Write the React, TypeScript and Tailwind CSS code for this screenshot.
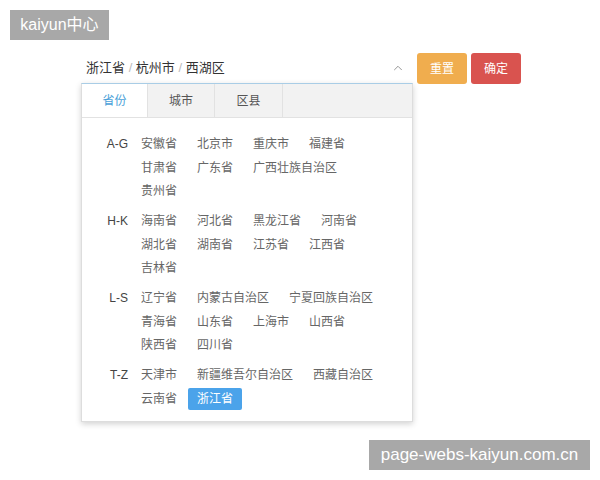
import { ChevronUp } from "lucide-react";

const groups = ["A-G", "H-K", "L-S", "T-Z"];

const rows: Record<string, string[][]> = {
  "A-G": [["安徽省", "北京市", "重庆市", "福建省"], ["甘肃省", "广东省", "广西壮族自治区"], ["贵州省"]],
  "H-K": [["海南省", "河北省", "黑龙江省", "河南省"], ["湖北省", "湖南省", "江苏省", "江西省"], ["吉林省"]],
  "L-S": [["辽宁省", "内蒙古自治区", "宁夏回族自治区"], ["青海省", "山东省", "上海市", "山西省"], ["陕西省", "四川省"]],
  "T-Z": [["天津市", "新疆维吾尔自治区", "西藏自治区"], ["云南省", "浙江省"]],
};

export default function App() {
  return (
    <div className="relative h-[480px] w-[600px] overflow-hidden bg-white font-['Liberation_Sans','Noto_Sans_CJK_SC',sans-serif]">
      <div className="absolute left-[10px] top-[10px] flex h-[30px] w-[99px] items-center justify-center bg-[#a8a8a8] text-[16px] text-white">
        kaiyun中心
      </div>

      <div className="flex items-start pl-[81px] pt-[53px]">
        <div className="w-[332px]">
          <div className="flex h-[30px] items-center justify-between pl-[5px] pr-[8px] text-[13px] text-[#333]">
            <span>
              浙江省 <span className="text-[#bbb]">/</span> 杭州市 <span className="text-[#bbb]">/</span> 西湖区
            </span>
            <ChevronUp className="h-[14px] w-[14px] text-[#888]" strokeWidth={1.5} />
          </div>
          <div className="border border-[#ddd] border-t-[#a9cde6] bg-white pb-[11px] shadow-[0_2px_6px_rgba(0,0,0,0.18)]">
            <div className="flex h-[34px] border-b border-[#e2e2e2] bg-[#f2f2f2] text-[12px]">
              <div className="flex w-[66px] items-center justify-center border-r border-[#e2e2e2] bg-white text-[#4a9fd8]">省份</div>
              <div className="flex w-[67px] items-center justify-center border-r border-[#e2e2e2] text-[#555]">城市</div>
              <div className="flex w-[68px] items-center justify-center border-r border-[#e2e2e2] text-[#555]">区县</div>
            </div>
            <div className="flex flex-col gap-[8px] pt-[15px] text-[12px]">
              {groups.map((g) => (
                <div key={g} className="flex">
                  <div className="w-[50px] pr-[4px] text-right leading-[22px] text-[#444]">{g}</div>
                  <div className="flex flex-col gap-[1.5px]">
                    {rows[g].map((r, i) => (
                      <div key={i} className="flex">
                        {r.map((it) => (
                          <span
                            key={it}
                            className={
                              it === "浙江省"
                                ? "mr-[2px] h-[22px] rounded-[2px] bg-[#4ba3ea] px-[9px] leading-[22px] text-white"
                                : "mr-[2px] h-[22px] px-[9px] leading-[22px] text-[#666]"
                            }
                          >
                            {it}
                          </span>
                        ))}
                      </div>
                    ))}
                  </div>
                </div>
              ))}
            </div>
          </div>
        </div>
        <div className="ml-[4px] flex gap-[4px]">
          <button className="h-[31px] w-[50px] rounded-[3px] bg-[#f0ad4e] text-[12px] text-white">重置</button>
          <button className="h-[31px] w-[50px] rounded-[3px] bg-[#d9534f] text-[12px] text-white">确定</button>
        </div>
      </div>

      <div className="absolute left-[369px] top-[440px] flex h-[30px] w-[221px] items-center justify-center bg-[#a8a8a8] text-[17px] text-white">
        page-webs-kaiyun.com.cn
      </div>
    </div>
  );
}
